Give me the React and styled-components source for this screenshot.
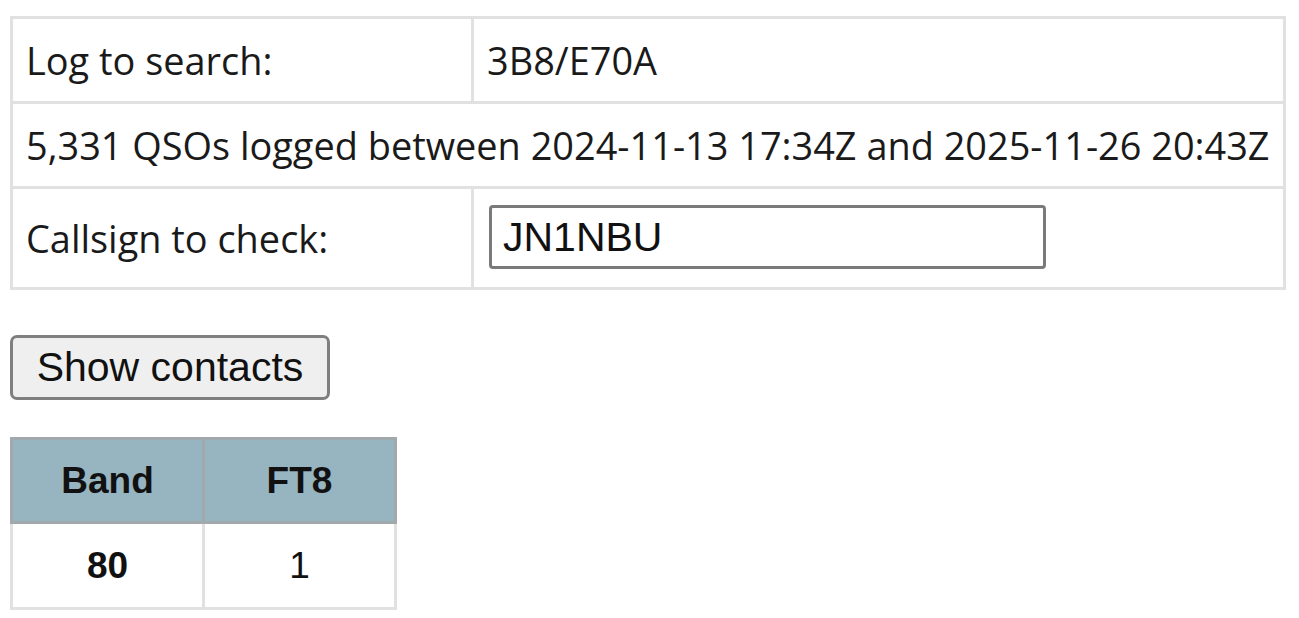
import styled, { createGlobalStyle } from 'styled-components';

const GlobalStyle = createGlobalStyle`
  html, body {
    margin: 0;
    padding: 0;
    background: #ffffff;
  }
  body {
    padding: 16px 10px;
  }
`;

// Search form table
const FormTable = styled.table`
  border-collapse: collapse;
  font-family: "Open Sans", "Liberation Sans", sans-serif;
  font-size: 37.9px;
  line-height: 52px;
  color: #1a1a1a;
`;

const Cell = styled.td`
  border: 3px solid #e1e1e1;
  padding: 15px 13px;
  text-align: left;
  vertical-align: middle;
  white-space: nowrap;
  width: ${(p) => (p.$label ? '432px' : 'auto')};
`;

const CallInput = styled.input`
  display: block;
  box-sizing: border-box;
  width: 557px;
  height: 64px;
  margin: 1px 0 3px 2px;
  padding: 0 11px;
  border: 3px solid #7a7a7a;
  border-radius: 4px;
  font-family: "Liberation Sans", Arial, sans-serif;
  font-size: 41px;
  color: #111;
  background: #fff;
  outline: none;
`;

const ShowButton = styled.button`
  display: block;
  box-sizing: border-box;
  margin: 45px 0 37px;
  width: 320px;
  height: 65px;
  padding: 0;
  background: #efefef;
  border: 3px solid #7f7f7f;
  border-radius: 7px;
  font-family: "Liberation Sans", Arial, sans-serif;
  font-size: 41px;
  color: #111;
  cursor: pointer;
`;

// Results table
const ResultTable = styled.table`
  border-collapse: collapse;
  font-family: "Liberation Sans", Arial, sans-serif;
  font-size: 37px;
  color: #111;
`;

const HeadCell = styled.th`
  width: 189px;
  height: 81px;
  padding: 0;
  background: #97b4c1;
  border: 3px solid #a2a9ad;
  font-weight: bold;
  text-align: center;
`;

const DataCell = styled.td`
  height: 83px;
  padding: 0;
  border: 3px solid #e1e1e1;
  text-align: center;
  font-weight: ${(p) => (p.$strong ? 'bold' : 'normal')};
`;

export default function App() {
  return (
    <>
      <GlobalStyle />
      <FormTable>
        <tbody>
          <tr>
            <Cell $label>Log to search:</Cell>
            <Cell>3B8/E70A</Cell>
          </tr>
          <tr>
            <Cell colSpan={2}>
              5,331 QSOs logged between 2024-11-13 17:34Z and 2025-11-26 20:43Z
            </Cell>
          </tr>
          <tr>
            <Cell $label>Callsign to check:</Cell>
            <Cell>
              <CallInput type="text" defaultValue="JN1NBU" />
            </Cell>
          </tr>
        </tbody>
      </FormTable>

      <ShowButton type="button">Show contacts</ShowButton>

      <ResultTable>
        <thead>
          <tr>
            <HeadCell>Band</HeadCell>
            <HeadCell>FT8</HeadCell>
          </tr>
        </thead>
        <tbody>
          <tr>
            <DataCell $strong>80</DataCell>
            <DataCell>1</DataCell>
          </tr>
        </tbody>
      </ResultTable>
    </>
  );
}
